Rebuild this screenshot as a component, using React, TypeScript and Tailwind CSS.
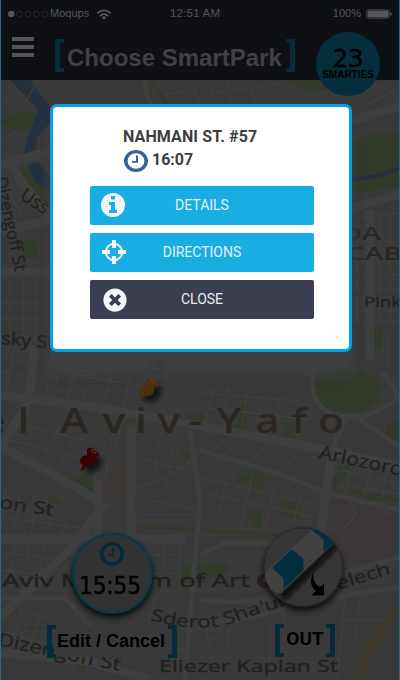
import React from "react";
import { FaTimesCircle } from "react-icons/fa";

function Bracket({ side }: { side: "left" | "right" }) {
  return (
    <span
      className={
        side === "left"
          ? "block h-[33px] w-[9px] shrink-0 border-y-4 border-l-[5px] border-[#052c39]"
          : "block h-[33px] w-[9px] shrink-0 border-y-4 border-r-[5px] border-[#052c39]"
      }
    />
  );
}

function Pin({ x, y, fill, rim }: { x: number; y: number; fill: string; rim: string }) {
  return (
    <g transform={`translate(${x} ${y})`}>
      <ellipse cx="13" cy="17" rx="10" ry="7" fill="#080808" opacity="0.8" filter="url(#soft)" transform="rotate(-35 13 17)" />
      <path d="M4 17L0 23.5L1.5 24L7 18Z" fill={fill} />
      <path d="M7 2Q11-1 16 3Q20 7 19 9L15 11Q16 19 8 19Q0 19 0 14Q0 9 7 8Z" fill={fill} />
      <ellipse cx="14" cy="4" rx="2.6" ry="1.5" fill={fill} stroke={rim} strokeWidth="0.7" transform="rotate(28 14 4)" />
    </g>
  );
}

function CityMap() {
  return (
    <svg className="absolute inset-0 h-full w-full" viewBox="0 0 400 680" fontFamily="'Open Sans', 'Noto Sans', sans-serif">
      <defs>
        <filter id="soft" x="-50%" y="-50%" width="200%" height="200%">
          <feGaussianBlur stdDeviation="2" />
        </filter>
      </defs>
      <rect width="400" height="680" fill="#393939" />

      <g fill="#3b3734">
        <path d="M95 475L124 466L126 495H95Z" />
        <path d="M136 456H146L142 495H136Z" />
        <path d="M126 495H136L134 536H126Z" />
        <path d="M78 520H90V536H78Z" />
        <path d="M8 617L37 588L40 592L12 622Z" />
        <path d="M28 200L50 215V225L16 228Z" />
      </g>
      <path d="M330 490L394 499L397 555L352 566L328 545Z" fill="#3b3738" />

      <g fill="#25303e">
        <path d="M10 80H30L50 107V123L37 137L35 153L23 157L28 137L38 110Z" />
        <path d="M28 165L38 162L50 177V190L35 183Z" />
      </g>
      <g fill="#30392a">
        <path d="M0 123L18 112L35 112L31 130L15 130Z" />
        <path d="M15 170L28 167L36 183L50 190V207L30 190Z" />
        <path d="M22 240L37 238V249H39L37 258L23 258Z" />
        <path d="M5 333L13 329L22 331L20 335H6Z" />
        <path d="M350 141L370 134L400 132V187L350 194Z" />
        <path d="M366 336L374 329L383 328L381 347L373 350L367 344Z" />
        <ellipse cx="348" cy="391" rx="33" ry="22" />
        <path d="M287 80H330V90L308 92Z" />
        <path d="M370 345H382V350H372Z" />
        <path d="M58 374L68 370L63 388L56 386Z" />
        <path d="M60 478L92 473L96 494L82 488Z" />
        <path d="M184 413H203V423L188 422Z" />
        <path d="M182 452L195 453L188 461L181 457Z" />
        <path d="M242 404H250L243 434H234Z" />
        <path d="M282 425L294 421L293 431L299 440L288 437Z" />
        <path d="M386 424L400 422V441H386Z" />
        <path d="M238 477L248 472L264 474L262 489L235 482Z" />
        <path d="M338 466L354 466L351 476L338 474Z" />
        <path d="M334 475L344 476L342 487L332 484Z" />
        <path d="M48 497H54L66 506L64 506L49 502Z" />
        <path d="M51 569L68 556L70 559L53 571Z" />
        <path d="M180 564H200L228 563V570L205 583H180Z" />
        <path d="M250 508L262 508V527L254 528L248 515Z" />
        <path d="M282 501L300 505L299 519L279 516Z" />
        <path d="M366 492L382 495L379 507L367 501Z" />
        <path d="M26 626H44L42 631H27Z" />
        <path d="M73 662H88L85 673L77 669Z" />
      </g>
      <g fill="none" stroke="#30392a" strokeWidth="3.5">
        <path d="M138 526L200 530L278 535" />
        <path d="M347 490L369 495L400 501" />
        <path d="M32 653L48 662" />
      </g>
      <path d="M344 181L370 177Q382 175 400 168" stroke="#252e41" strokeWidth="4" fill="none" />

      <g fill="none" stroke="#3f3f3f">
        <g strokeWidth="9">
          <path d="M0 165L50 151" />
          <path d="M10 162Q25 190 50 215" />
          <path d="M0 232L55 218" />
          <path d="M0 272H50" />
          <path d="M0 395L100 408L200 426L290 443L400 466" />
          <path d="M0 447L60 478L100 502" />
          <path d="M34 345L31 385L24 410L0 448" />
          <path d="M131 425V540" />
          <path d="M333 447L325 498L317 560" />
          <path d="M0 539H185" />
          <path d="M98 480V536" />
          <path d="M0 618L72 547L106 503" />
          <path d="M0 653L88 661L150 680" />
          <path d="M345 123L400 106" />
          <path d="M345 210L400 194" />
          <path d="M370 210V360" />
        </g>
        <g strokeWidth="5">
          <path d="M145 80Q145 95 152 105" />
          <path d="M190 430L200 500L185 680" />
          <path d="M316 368Q306 386 320 406Q336 422 366 416Q391 405 400 397M382 372Q392 382 400 400" />
          <path d="M345 418L334 448M356 417L400 447" />
          <path d="M200 450L280 474L330 494L400 510" />
          <path d="M200 600Q270 608 320 580L400 557" />
          <path d="M200 623L255 617L310 601L400 587" />
          <path d="M200 555L225 543L284 543" />
          <path d="M0 598H65L92 628" />
        </g>
        <g strokeWidth="1.4">
          <path d="M1 95L22 110M38 80L20 112M0 140L15 132M8 190L26 222M10 280V340M23 278V338M35 278V342M0 302H42M0 318H42" />
          <path d="M3 358L38 365M0 371L35 378M5 398L15 345M52 350L46 395M60 362L53 404M77 365L65 409M94 370L79 413M112 374L98 418M130 378L120 421M150 380L145 425M62 372L145 387" />
          <path d="M18 424L100 444M10 440L84 459M41 418L22 450M59 427L43 459M75 433L60 467M91 438L78 475M105 440L94 484M113 430L105 480M125 418L112 452" />
          <path d="M145 460L200 473M139 487Q175 480 200 450M150 500L200 510M145 515H200M160 434L154 481M175 435L166 488" />
          <path d="M214 389L205 423M228 386L222 430M248 392L240 437M262 397L258 440M279 398L275 442M298 394V447M206 408L316 420M202 393L300 401" />
          <path d="M201 460L225 440M216 463L242 440M246 468L269 443M282 473L299 451M300 480L315 454M202 478L317 505M203 493L330 520M228 468L220 512M252 476L240 530M275 482L264 532M302 489L290 540" />
          <path d="M340 470L400 483M338 484L400 494M353 458L345 493M372 463L364 497M388 467L382 497M350 500L356 515L345 528L333 520M365 520L380 510L395 514" />
          <path d="M6 490L1 525M20 493L13 535M36 500L31 536M52 510L47 538M67 516L62 538M0 517L88 529M4 552L60 560M15 540L10 588M29 542L24 590M45 543L39 580M0 570L42 575" />
          <path d="M148 545L144 590M165 545L160 597M180 545V596M145 555H182M146 573H182M10 605L60 622M5 632L50 645M22 608L12 645M40 612L29 651M110 670L121 635M130 633L145 662M145 640L190 652M155 598L145 638" />
          <path d="M205 618L215 680M232 615L226 655M270 609V660M284 605V658M345 598L337 680M361 593L354 651M205 640H330M340 620H388M340 640H367" />
          <path d="M360 80Q390 87 400 101M365 105L400 89M350 119L370 84M357 210V330M379 206V320M390 205V330M350 218L400 213M350 275H400M350 289H400M350 321H400M388 332V368" />
          <path d="M178 82L190 103M190 80L200 104M160 95L197 89M210 83L214 104M228 80L231 104M250 80L255 104M205 94L282 84" />
        </g>
      </g>
      <path d="M400 607L385 624L367 653L358 680" stroke="#3e392b" strokeWidth="9" fill="none" />
      <path d="M151 80L167 104" stroke="#30392a" strokeWidth="4" fill="none" />

      <g fill="#212121" stroke="#212121" strokeWidth="0.35" fontSize="18">
        <text x="19" y="198" fontSize="18" transform="rotate(33 19 198)">Uss</text>
        <text x="-5" y="178" fontSize="17" textLength="96" lengthAdjust="spacingAndGlyphs" transform="rotate(78 -5 178)">Dizengoff St</text>
        <text x="1" y="344" fontSize="17" textLength="53" lengthAdjust="spacingAndGlyphs" transform="rotate(5 1 344)">sky St</text>
        <text x="164" y="390" transform="rotate(-92 164 390)" fill="#2d2d2d" stroke="none">n G</text>
        <text x="364" y="307" fontSize="15" textLength="56" lengthAdjust="spacingAndGlyphs">Pinkas</text>
        <text x="318" y="458" fontSize="18" textLength="96" lengthAdjust="spacingAndGlyphs" transform="rotate(12 318 458)">Arlozorov</text>
        <text x="-1" y="508" fontSize="17" textLength="54" lengthAdjust="spacingAndGlyphs" transform="rotate(8 -1 508)">on St</text>
        <text x="2" y="587" fontSize="19" textLength="248" lengthAdjust="spacingAndGlyphs" strokeWidth="0.5">Aviv Museum of Art</text>
        <text x="-3" y="645" fontSize="18" textLength="125" lengthAdjust="spacingAndGlyphs" transform="rotate(12 -3 645)">Dizengoff St</text>
        <path id="boulevard" d="M150 620Q205 636 245 618L400 571" fill="none" stroke="none" />
        <text fontSize="17" textLength="250" lengthAdjust="spacingAndGlyphs"><textPath href="#boulevard">Sderot Sha'ul HaMelech</textPath></text>
        <text x="159" y="672" fontSize="17" textLength="179" lengthAdjust="spacingAndGlyphs">Eliezer Kaplan St</text>
      </g>
      <g fill="#2c241e" fontWeight="600" fontSize="18">
        <text x="341" y="240" textLength="40" lengthAdjust="spacingAndGlyphs">DA</text>
        <text x="347" y="260" textLength="55" lengthAdjust="spacingAndGlyphs">CAB</text>
      </g>
      <text transform="scale(1.25 1)" x="-15 14 48 82 108 126 151 173 204 233 254.5" y="433" fontSize="34" fontWeight="600" fill="#2b2620">
        elAviv-Yafo
      </text>
      <circle cx="264" cy="581" r="7" fill="#2c211d" />
      <circle cx="265" cy="580" r="2.5" fill="#444040" />

      <g fill="#4c4c4c" fillOpacity="0.11" stroke="#252525" strokeOpacity="0.3" strokeWidth="0.6">
        <rect x="41" y="122" width="320" height="263" rx="18" />
        <rect x="43" y="124" width="316" height="259" rx="18" />
        <rect x="45" y="126" width="312" height="254" rx="18" />
        <rect x="47" y="128" width="308" height="249" rx="18" />
        <rect x="49" y="130" width="304" height="244" rx="18" />
      </g>
      <path d="M55 386H348" stroke="#202020" strokeWidth="3" opacity="0.45" filter="url(#soft)" />

      <Pin x={139} y={377} fill="#49300f" rim="#5c4a2b" />
      <Pin x={80} y={447} fill="#3d0103" rim="#5f5555" />
    </svg>
  );
}

function StatusBar() {
  return (
    <div className="flex h-7 items-center pl-2 pr-2 text-[11px] text-[#535456]">
      <svg className="h-2 w-[41px]" viewBox="0 0 41 8">
        <circle cx="3.2" cy="4" r="3.2" fill="#555659" />
        {[11.5, 20, 28.5, 37].map((x) => (
          <circle key={x} cx={x} cy="4" r="2.8" fill="none" stroke="#303135" strokeWidth="0.7" />
        ))}
      </svg>
      <span className="ml-px w-[46px] -mt-px">Moqups</span>
      <svg className="h-[11px] w-4" viewBox="0 0 16 11" fill="none" stroke="#555659" strokeWidth="1.8">
        <path d="M1 4.5Q8-1.8 15 4.5M3.8 7Q8 3.3 12.2 7" />
        <path d="M5.6 8.3Q8 6.3 10.4 8.3L8 10.5Z" fill="#555659" stroke="none" />
      </svg>
      <span className="ml-[58px] mr-auto text-[11.5px] tracking-[0.2px]">12:51 AM</span>
      <span className="-mt-px">100%</span>
      <svg className="ml-[5px] h-[10px] w-[26px]" viewBox="0 0 26 10">
        <rect x="0.5" y="0.5" width="23" height="9" rx="2" fill="none" stroke="#333437" />
        <rect x="1.5" y="1.5" width="21" height="7" rx="1" fill="#555659" />
        <path d="M24 3Q26 3.5 26 5Q26 6.5 24 7Z" fill="#434447" />
      </svg>
    </div>
  );
}

function Header() {
  return (
    <header className="relative h-20 bg-[#0f1014]">
      <StatusBar />
      <div className="flex items-start pl-3">
        <div className="mt-[9px] flex w-[22px] flex-col gap-1">
          <span className="h-1 bg-[#535456]" />
          <span className="h-1 bg-[#535456]" />
          <span className="h-1 bg-[#535456]" />
        </div>
        <div className="ml-[21px] mt-[11px] flex">
          <Bracket side="left" />
          <h1 className="w-[222px] pl-[3px] pt-[5px] text-2xl leading-7 font-bold whitespace-nowrap text-[#414144]">
            Choose SmartPark
          </h1>
          <Bracket side="right" />
        </div>
      </div>
      <div className="absolute left-[316px] top-8 flex h-16 w-16 flex-col items-center rounded-full bg-[#052e3c] text-black">
        <svg className="mt-4 h-5 w-8" viewBox="0 0 32 20">
          <text x="0.5" y="18.5" fontSize="24" fontFamily="'DejaVu Sans', sans-serif" textLength="31" lengthAdjust="spacingAndGlyphs" stroke="#000" strokeWidth="0.5">23</text>
        </svg>
        <span className="mt-[1px] text-[10px] leading-3 font-bold">SMARTIES</span>
      </div>
    </header>
  );
}

function Clock({ className }: { className: string }) {
  return (
    <svg className={className} viewBox="0 0 24 24" preserveAspectRatio="none" fill="none" stroke="currentColor">
      <circle cx="12" cy="12" r="10.2" strokeWidth="3.6" />
      <path d="M13 6V13H8" strokeWidth="2" />
    </svg>
  );
}

function InfoIcon() {
  return (
    <svg className="absolute left-[11px] top-[7px] h-6 w-6" viewBox="0 0 24 24">
      <circle cx="12" cy="12" r="12" fill="#f5f5f5" />
      <path d="M10 3H14V6.5H10ZM8 9H14V17H16V20H8V17H10V12H8Z" fill="#19ade1" />
    </svg>
  );
}

function CrosshairIcon() {
  return (
    <svg className="absolute left-3 top-[7px] h-6 w-6" viewBox="0 0 24 24" fill="none" stroke="#f5f5f5">
      <circle cx="12" cy="12" r="8.2" strokeWidth="2" />
      <path d="M12 0V8M12 16V24M0 12H8M16 12H24" strokeWidth="4" />
    </svg>
  );
}

function ActionButton({ icon, label, tone }: { icon: React.ReactNode; label: string; tone: "blue" | "dark" }) {
  return (
    <button
      className={
        tone === "blue"
          ? "relative h-[39px] w-full rounded-[2px] bg-[#19ade1] pb-0.5 font-['Roboto',sans-serif] text-sm text-[#e2f2fa]"
          : "relative h-[39px] w-full rounded-[2px] bg-[#3b3e51] pb-0.5 font-['Roboto',sans-serif] text-sm text-[#e9e9ed]"
      }
    >
      {icon}
      {label}
    </button>
  );
}

function Dialog() {
  return (
    <section className="absolute left-[50px] top-[104px] h-[248px] w-[302px] rounded-[7px] border-[3px] border-[#03a2e8] bg-white px-[37px] pt-[18px]">
      <div className="ml-[33px] font-['Roboto',sans-serif] text-base font-bold text-[#3d3d3f]">
        <p className="leading-6 tracking-[0.11px] whitespace-nowrap">NAHMANI ST. #57</p>
        <div className="flex h-6 items-start">
          <Clock className="ml-px mt-px h-[22px] w-6 text-[#36619b]" />
          <span className="ml-1 leading-[22px]">16:07</span>
        </div>
      </div>
      <div className="mt-[13px] flex w-[224px] flex-col gap-2">
        <ActionButton tone="blue" label="DETAILS" icon={<InfoIcon />} />
        <ActionButton tone="blue" label="DIRECTIONS" icon={<CrosshairIcon />} />
        <ActionButton tone="dark" label="CLOSE" icon={<FaTimesCircle className="absolute left-[13px] top-[8px] text-[24px] text-[#f5f5f5]" />} />
      </div>
    </section>
  );
}

function Barrier() {
  return (
    <svg className="block h-20 w-20" viewBox="0 0 80 80">
      <defs>
        <clipPath id="disc"><circle cx="40" cy="40" r="39" /></clipPath>
      </defs>
      <circle cx="40" cy="40" r="39.3" fill="#353535" stroke="#202020" strokeWidth="0.8" />
      <g clipPath="url(#disc)">
        <path d="M16 67L72 14L78 17L21 74Z" fill="#080808" filter="url(#soft)" />
        <path d="M3 44L49 3L72 15L17 67L0 60Z" fill="#414141" />
        <path d="M9 40.7L29 22.3L40.5 31.7V43.3L20.5 62.3V51Z" fill="#042e40" />
        <path d="M49 3L56 -4L76 8L72 15L60.5 25V12.7Z" fill="#042e40" />
      </g>
      <path d="M50 46Q45 58 53 64L48 68.5H61V57L57 60Q50 57 50 46Z" fill="#000" />
    </svg>
  );
}

function Controls() {
  return (
    <main className="relative flex pt-[453px]">
      <div className="ml-[47px] w-[130px]">
        <div className="ml-[25px] flex h-[81px] w-[81px] flex-col items-center rounded-full border-2 border-[#06394b] bg-[#323232] shadow-[0_4px_6px_#0c0c0c]">
          <Clock className="mt-[7px] mr-[2px] h-6 w-6 text-[#052c3b]" />
          <svg className="mt-[9px] mr-[5px] h-5 w-[62px]" viewBox="0 0 62 20">
            <text x="0" y="19" fontSize="24" fontFamily="'DejaVu Sans', sans-serif" textLength="62" lengthAdjust="spacingAndGlyphs" stroke="#000" strokeWidth="0.5">15:55</text>
          </svg>
        </div>
        <div className="mt-[11px] flex">
          <Bracket side="left" />
          <span className="mt-px h-[31px] w-[112px] bg-[#393939] pl-px text-[18px] leading-[31px] font-bold whitespace-nowrap">Edit / Cancel</span>
          <Bracket side="right" />
        </div>
      </div>
      <div className="-mt-[6px] ml-[86px] w-[84px]">
        <div className="h-20 w-20 rounded-full shadow-[0_4px_6px_#0c0c0c]"><Barrier /></div>
        <div className="ml-3 mt-[17px] flex">
          <Bracket side="left" />
          <span className="mt-px h-[31px] w-[42px] bg-[#393939] text-center font-['Roboto',sans-serif] text-[19px] leading-7 font-bold">OUT</span>
          <Bracket side="right" />
        </div>
      </div>
    </main>
  );
}

export default function App() {
  return (
    <div className="relative h-[680px] w-[400px] overflow-hidden font-['Liberation_Sans',Arial,sans-serif]">
      <CityMap />
      <Header />
      <Controls />
      <Dialog />
      <div className="pointer-events-none absolute inset-0 border-x border-[#216b85]" />
    </div>
  );
}
